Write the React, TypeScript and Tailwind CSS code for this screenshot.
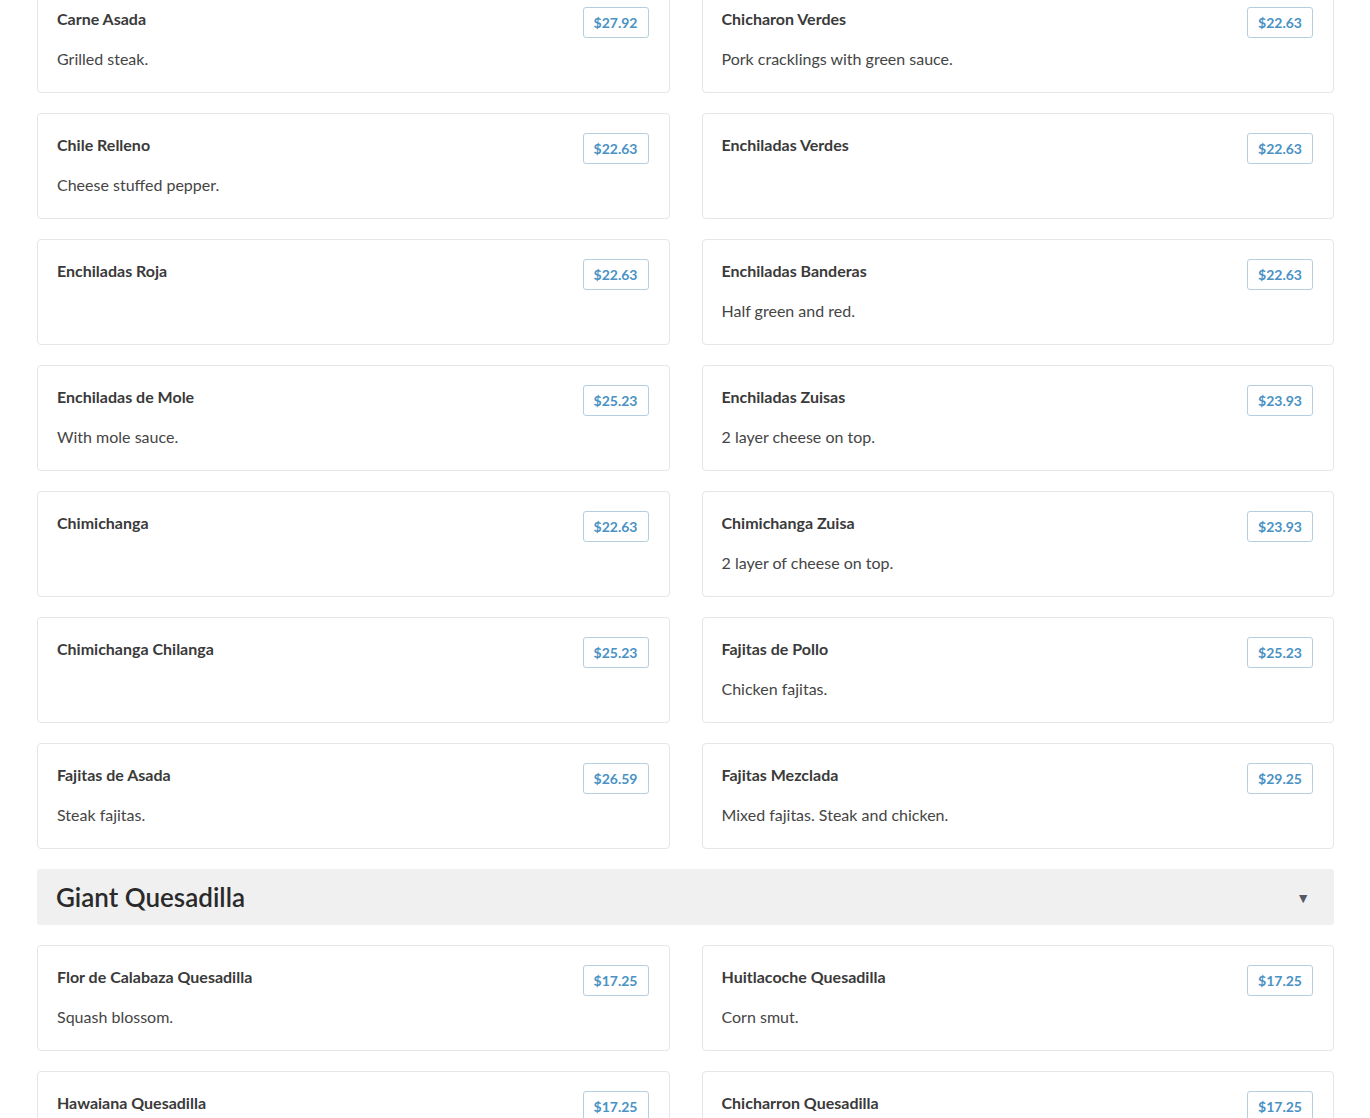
import React from 'react';

type Item = { name: string; price: string; desc?: string };

const fajitaRows: Item[] = [
  { name: 'Carne Asada', price: '$27.92', desc: 'Grilled steak.' },
  { name: 'Chicharon Verdes', price: '$22.63', desc: 'Pork cracklings with green sauce.' },
  { name: 'Chile Relleno', price: '$22.63', desc: 'Cheese stuffed pepper.' },
  { name: 'Enchiladas Verdes', price: '$22.63' },
  { name: 'Enchiladas Roja', price: '$22.63' },
  { name: 'Enchiladas Banderas', price: '$22.63', desc: 'Half green and red.' },
  { name: 'Enchiladas de Mole', price: '$25.23', desc: 'With mole sauce.' },
  { name: 'Enchiladas Zuisas', price: '$23.93', desc: '2 layer cheese on top.' },
  { name: 'Chimichanga', price: '$22.63' },
  { name: 'Chimichanga Zuisa', price: '$23.93', desc: '2 layer of cheese on top.' },
  { name: 'Chimichanga Chilanga', price: '$25.23' },
  { name: 'Fajitas de Pollo', price: '$25.23', desc: 'Chicken fajitas.' },
  { name: 'Fajitas de Asada', price: '$26.59', desc: 'Steak fajitas.' },
  { name: 'Fajitas Mezclada', price: '$29.25', desc: 'Mixed fajitas. Steak and chicken.' },
];

const quesadillas: Item[] = [
  { name: 'Flor de Calabaza Quesadilla', price: '$17.25', desc: 'Squash blossom.' },
  { name: 'Huitlacoche Quesadilla', price: '$17.25', desc: 'Corn smut.' },
  { name: 'Hawaiana Quesadilla', price: '$17.25' },
  { name: 'Chicharron Quesadilla', price: '$17.25' },
];

function MenuCard({ item }: { item: Item }) {
  return (
    <div className="bg-white border border-[#e6e6e6] rounded-[4px] pl-[19px] pr-5 py-5 min-h-[106px]">
      <div className="flex justify-between items-start h-[33px]">
        <h3 className="text-[16px] font-bold leading-6 -mt-px text-[#3a3a3a]">{item.name}</h3>
        <span className="h-[31px] -mt-px px-[10px] flex items-center border border-[#b5cfe0] rounded-[3px] text-[14px] font-bold text-[#4a92c4]">
          {item.price}
        </span>
      </div>
      {item.desc && (
        <p className="mt-[6px] text-[16px] leading-6 text-[#454545]">{item.desc}</p>
      )}
    </div>
  );
}

function Grid({ items }: { items: Item[] }) {
  return (
    <div className="grid grid-cols-2 gap-x-8 gap-y-5">
      {items.map((it) => (
        <MenuCard key={it.name} item={it} />
      ))}
    </div>
  );
}

export default function App() {
  return (
    <div className="min-h-screen bg-white overflow-hidden" style={{ fontFamily: 'Lato, "Noto Sans", sans-serif' }}>
      <div className="ml-[37px] mr-[36px] -mt-[13px] flex flex-col gap-5">
        <Grid items={fajitaRows} />
        <div className="h-14 bg-[#f0f0f0] rounded-[3px] pl-[19px] pr-6 flex items-center justify-between">
          <h2 className="text-[26px] leading-8 font-semibold text-[#2a2a2a]">Giant Quesadilla</h2>
          <span className="text-[14px] text-[#555a66]">▼</span>
        </div>
        <Grid items={quesadillas} />
      </div>
    </div>
  );
}
